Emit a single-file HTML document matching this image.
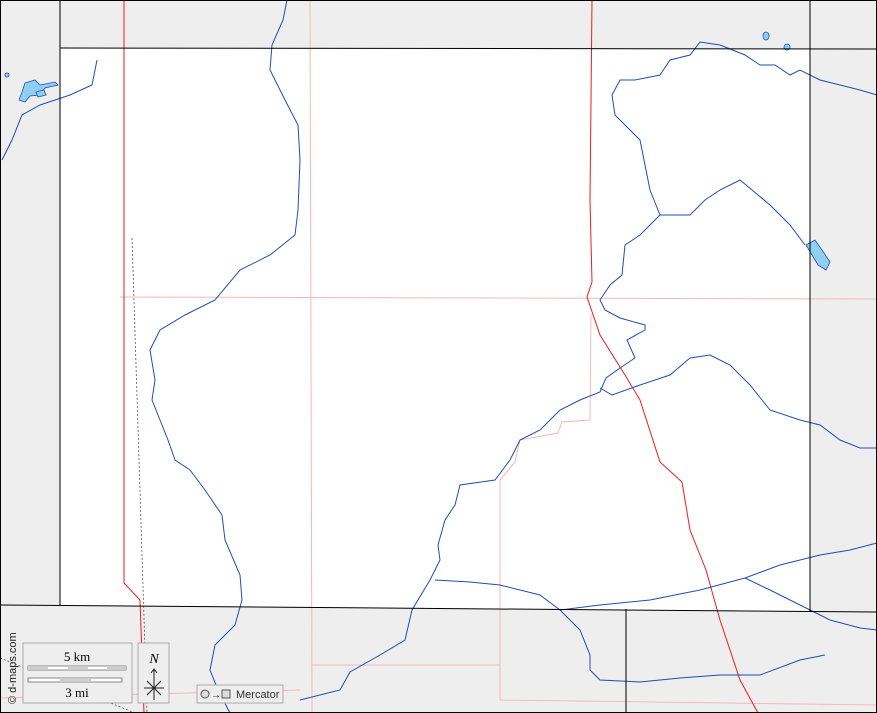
<!DOCTYPE html>
<html><head><style>
html,body{margin:0;padding:0;background:#fff}
svg{display:block}
</style></head><body>
<svg width="877" height="713" viewBox="0 0 877 713" xmlns="http://www.w3.org/2000/svg">
<rect x="0" y="0" width="877" height="713" fill="#eeeeee"/>
<polygon points="60,48 810,49 810,611 60,605" fill="#ffffff"/>
<g fill="none" stroke="#f4b8b8" stroke-width="1">
<path d="M120,297 L877,299"/>
<path d="M310,0 L312,713"/>
<path d="M312,665 L500,665"/>
<path d="M500,480 L500,700 L877,705"/>
<path d="M500,480 L515,462 L520,440 L558,433 L562,422 L590,420 L591,315"/>
<path d="M0,698 L300,690"/>
</g>
<g fill="none" stroke="#555" stroke-width="0.8" stroke-dasharray="2,2">
<path d="M132,238 L147,713"/>
<path d="M0,658 L135,713"/>
</g>
<g fill="none" stroke="#ee1c1c" stroke-width="1">
<path d="M124,0 L124,583 L140,600 L144,713"/>
<path d="M592,0 L590,200 L592,282 L587,297 L600,335 L625,375 L640,400 L660,462 L682,482 L690,530 L706,570 L720,620 L740,680 L758,713"/>
</g>
<g fill="none" stroke="#1f4eb4" stroke-width="1">
<path d="M287,0 L283,20 L272,45 L270,70 L285,100 L298,125 L300,160 L298,210 L295,235 L270,255 L240,270 L215,300 L185,315 L160,330 L150,350 L155,380 L152,400 L160,420 L168,440 L175,460 L190,470 L205,490 L222,515 L225,540 L240,575 L242,600 L235,625 L215,645 L210,670 L218,690 L230,713"/>
<path d="M300,700 L340,690 L350,672 L380,655 L405,640 L412,610 L430,580 L440,560 L438,545 L445,520 L455,505 L460,485 L495,480 L510,460 L520,440 L540,430 L560,410 L580,400 L600,392 L606,378 L620,368 L635,358 L627,340 L645,330 L645,325 L620,318 L605,310 L600,300 L610,285 L622,275 L625,245 L640,235 L660,215 L690,215 L705,200 L720,190 L740,180 L752,190 L770,205 L790,225 L805,245"/>
<path d="M660,215 L650,190 L645,165 L640,140 L630,130 L615,115 L612,95 L620,80 L635,80 L660,75 L670,60 L690,55 L700,42 L720,45 L745,55 L760,65 L775,65 L790,75 L800,70 L820,80 L840,85 L860,90 L877,95"/>
<path d="M600,388 L612,395 L640,385 L670,375 L690,358 L710,355 L730,365 L750,385 L770,410 L800,420 L820,425 L840,440 L860,448 L877,448"/>
<path d="M435,580 L470,582 L500,585 L540,595 L560,610 L580,630 L590,655 L590,670 L600,680 L640,682 L680,678 L720,675 L760,675 L800,660 L825,655"/>
<path d="M560,610 L600,605 L650,600 L700,590 L745,578 L780,565 L820,555 L850,550 L877,543"/>
<path d="M745,578 L770,590 L800,605 L830,620 L860,628 L877,630"/>
<path d="M97,60 L92,85 L70,95 L40,105 L22,115 L12,140 L2,160"/>
</g>
<g fill="#8fd0f0" stroke="#1f4eb4" stroke-width="0.8">
<path d="M25,83 L35,80 L40,85 L55,82 L58,85 L45,88 L40,95 L30,96 L25,102 L19,100 L22,92 Z"/>
<path d="M36,92 L44,90 L46,95 L38,97 Z"/>
<ellipse cx="7" cy="75" rx="2" ry="2"/>
<path d="M806,245 L815,240 L822,250 L830,262 L826,270 L818,265 L812,255 Z"/>
<ellipse cx="766" cy="36" rx="3" ry="4"/>
<ellipse cx="787" cy="47" rx="3" ry="3"/>
</g>
<g fill="none" stroke="#000" stroke-width="1">
<path d="M60,0 L60,605"/>
<path d="M60,48 L877,49"/>
<path d="M810,0 L810,611"/>
<path d="M0,605 L877,612"/>
<path d="M626,609 L626,713"/>
<rect x="0.5" y="0.5" width="876" height="712"/>
</g>
<g>
<rect x="23" y="643" width="109" height="60" fill="#eeeeee" stroke="#aaa"/>
<text x="77" y="661" font-family="Liberation Serif" font-size="13" text-anchor="middle">5 km</text>
<rect x="28" y="666" width="98" height="4" fill="#fff" stroke="#444" stroke-width="0.6"/>
<rect x="28" y="666" width="20" height="4" fill="#ccc"/><rect x="68" y="666" width="20" height="4" fill="#ccc"/><rect x="107" y="666" width="19" height="4" fill="#ccc"/>
<rect x="28" y="678" width="94" height="4" fill="#fff" stroke="#444" stroke-width="0.6"/>
<rect x="60" y="678" width="31" height="4" fill="#ccc"/>
<text x="77" y="697" font-family="Liberation Serif" font-size="13" text-anchor="middle">3 mi</text>
<rect x="138" y="643" width="31" height="60" fill="#eeeeee" stroke="#aaa"/>
<text x="154" y="663" font-family="Liberation Serif" font-style="italic" font-size="14" text-anchor="middle">N</text>
<path d="M154,670 L154,700 M144,688 L164,688 M147,681 L161,695 M161,681 L147,695 M151,673 L154,669 L157,673" stroke="#222" fill="none" stroke-width="1"/>
<rect x="197" y="685" width="86" height="18" fill="#eeeeee" stroke="#aaa"/>
<circle cx="205" cy="694" r="4" fill="#ddd" stroke="#555"/>
<text x="211" y="698" font-family="Liberation Sans" font-size="10">→</text>
<rect x="222" y="690" width="8" height="8" fill="#ddd" stroke="#555"/>
<text x="236" y="698" font-family="Liberation Sans" font-size="11" fill="#333">Mercator</text>
<text transform="translate(16,704) rotate(-90)" font-family="Liberation Sans" font-size="11" fill="#222">© d-maps.com</text>
</g>
</svg>
</body></html>
